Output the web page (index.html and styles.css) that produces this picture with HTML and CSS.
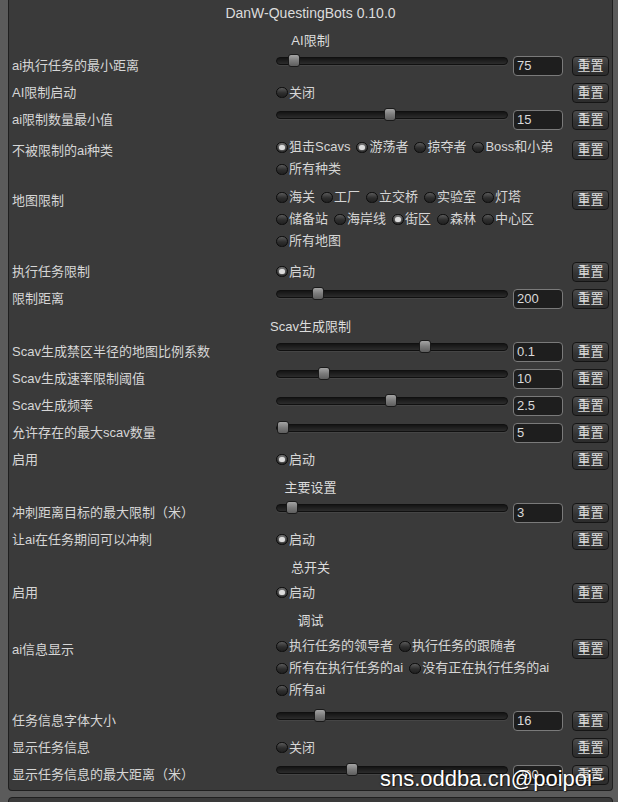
FILE: index.html
```html
<!DOCTYPE html>
<html lang="zh-CN">
<head>
    <meta charset="UTF-8">
    <title>DanW-QuestingBots</title>
    <link rel="stylesheet" href="styles.css">
</head>
<body>
<div class="window">
    <div class="title">DanW-QuestingBots 0.10.0</div>

    <div class="header">AI限制</div>
    <div class="row">
        <div class="label">ai执行任务的最小距离</div>
        <div class="ctrl">
            <div class="slider"><span class="thumb" style="left: 11px"></span></div>
            <div class="num">75</div>
        </div>
        <button class="reset">重置</button>
    </div>
    <div class="row">
        <div class="label">AI限制启动</div>
        <div class="ctrl"><span class="tog"><i class="box"></i>关闭</span></div>
        <button class="reset">重置</button>
    </div>
    <div class="row">
        <div class="label">ai限制数量最小值</div>
        <div class="ctrl">
            <div class="slider"><span class="thumb" style="left: 107px"></span></div>
            <div class="num">15</div>
        </div>
        <button class="reset">重置</button>
    </div>
    <div class="row multi short">
        <div class="label">不被限制的ai种类</div>
        <div class="ctrl">
            <div class="lines">
                <div class="line">
                    <span class="tog on"><i class="box"></i>狙击Scavs</span>
                    <span class="tog on"><i class="box"></i>游荡者</span>
                    <span class="tog"><i class="box"></i>掠夺者</span>
                    <span class="tog"><i class="box"></i>Boss和小弟</span>
                </div>
                <div class="line">
                    <span class="tog"><i class="box"></i>所有种类</span>
                </div>
            </div>
        </div>
        <button class="reset">重置</button>
    </div>
    <div class="row multi">
        <div class="label">地图限制</div>
        <div class="ctrl">
            <div class="lines">
                <div class="line">
                    <span class="tog"><i class="box"></i>海关</span>
                    <span class="tog"><i class="box"></i>工厂</span>
                    <span class="tog"><i class="box"></i>立交桥</span>
                    <span class="tog"><i class="box"></i>实验室</span>
                    <span class="tog"><i class="box"></i>灯塔</span>
                </div>
                <div class="line">
                    <span class="tog"><i class="box"></i>储备站</span>
                    <span class="tog"><i class="box"></i>海岸线</span>
                    <span class="tog on"><i class="box"></i>街区</span>
                    <span class="tog"><i class="box"></i>森林</span>
                    <span class="tog"><i class="box"></i>中心区</span>
                </div>
                <div class="line">
                    <span class="tog"><i class="box"></i>所有地图</span>
                </div>
            </div>
        </div>
        <button class="reset">重置</button>
    </div>
    <div class="row">
        <div class="label">执行任务限制</div>
        <div class="ctrl"><span class="tog on"><i class="box"></i>启动</span></div>
        <button class="reset">重置</button>
    </div>
    <div class="row">
        <div class="label">限制距离</div>
        <div class="ctrl">
            <div class="slider"><span class="thumb" style="left: 35px"></span></div>
            <div class="num">200</div>
        </div>
        <button class="reset">重置</button>
    </div>

    <div class="header">Scav生成限制</div>
    <div class="row">
        <div class="label">Scav生成禁区半径的地图比例系数</div>
        <div class="ctrl">
            <div class="slider"><span class="thumb" style="left: 142px"></span></div>
            <div class="num">0.1</div>
        </div>
        <button class="reset">重置</button>
    </div>
    <div class="row">
        <div class="label">Scav生成速率限制阈值</div>
        <div class="ctrl">
            <div class="slider"><span class="thumb" style="left: 41px"></span></div>
            <div class="num">10</div>
        </div>
        <button class="reset">重置</button>
    </div>
    <div class="row">
        <div class="label">Scav生成频率</div>
        <div class="ctrl">
            <div class="slider"><span class="thumb" style="left: 108px"></span></div>
            <div class="num">2.5</div>
        </div>
        <button class="reset">重置</button>
    </div>
    <div class="row">
        <div class="label">允许存在的最大scav数量</div>
        <div class="ctrl">
            <div class="slider"><span class="thumb" style="left: 0px"></span></div>
            <div class="num">5</div>
        </div>
        <button class="reset">重置</button>
    </div>
    <div class="row">
        <div class="label">启用</div>
        <div class="ctrl"><span class="tog on"><i class="box"></i>启动</span></div>
        <button class="reset">重置</button>
    </div>

    <div class="header">主要设置</div>
    <div class="row">
        <div class="label">冲刺距离目标的最大限制（米）</div>
        <div class="ctrl">
            <div class="slider"><span class="thumb" style="left: 9px"></span></div>
            <div class="num">3</div>
        </div>
        <button class="reset">重置</button>
    </div>
    <div class="row">
        <div class="label">让ai在任务期间可以冲刺</div>
        <div class="ctrl"><span class="tog on"><i class="box"></i>启动</span></div>
        <button class="reset">重置</button>
    </div>

    <div class="header">总开关</div>
    <div class="row">
        <div class="label">启用</div>
        <div class="ctrl"><span class="tog on"><i class="box"></i>启动</span></div>
        <button class="reset">重置</button>
    </div>

    <div class="header">调试</div>
    <div class="row multi">
        <div class="label">ai信息显示</div>
        <div class="ctrl">
            <div class="lines">
                <div class="line">
                    <span class="tog"><i class="box"></i>执行任务的领导者</span>
                    <span class="tog"><i class="box"></i>执行任务的跟随者</span>
                </div>
                <div class="line">
                    <span class="tog"><i class="box"></i>所有在执行任务的ai</span>
                    <span class="tog"><i class="box"></i>没有正在执行任务的ai</span>
                </div>
                <div class="line">
                    <span class="tog"><i class="box"></i>所有ai</span>
                </div>
            </div>
        </div>
        <button class="reset">重置</button>
    </div>
    <div class="row">
        <div class="label">任务信息字体大小</div>
        <div class="ctrl">
            <div class="slider"><span class="thumb" style="left: 37px"></span></div>
            <div class="num">16</div>
        </div>
        <button class="reset">重置</button>
    </div>
    <div class="row">
        <div class="label">显示任务信息</div>
        <div class="ctrl"><span class="tog"><i class="box"></i>关闭</span></div>
        <button class="reset">重置</button>
    </div>
    <div class="row">
        <div class="label">显示任务信息的最大距离（米）</div>
        <div class="ctrl">
            <div class="slider"><span class="thumb" style="left: 69px"></span></div>
            <div class="num">200</div>
        </div>
        <button class="reset">重置</button>
    </div>
</div>
<div class="next"></div>

<div class="mark">sns.oddba.cn@poipoi~</div>
</body>
</html>
```

FILE: styles.css
```css
* {
    margin: 0;
    padding: 0;
}

body {
    position: relative;
    background-color: #5b5b5b;
    color: #d6d6d6;
    font-family: "Liberation Sans", "Noto Sans CJK SC", sans-serif;
    font-size: 13px;
    overflow: hidden;
}

.window {
    width: 605px;
    margin-left: 8px;
    padding: 0 3px 2px;
    box-sizing: border-box;
    background-color: #3a3a3a;
    border: 1px solid #1f1f1f;
    border-top: 0;
    border-radius: 0 0 4px 4px;
}

.title {
    height: 25px;
    padding-top: 1px;
    line-height: 25px;
    text-align: center;
    font-size: 14px;
    color: #dcdcdc;
}

.header {
    height: 23px;
    padding-top: 3px;
    line-height: 23px;
    text-align: center;
    color: #dcdcdc;
}

.row {
    display: flex;
    align-items: center;
    height: 27px;
}
.row.multi {
    height: auto;
    align-items: flex-start;
    padding: 3px 0 6px;
}
.row.multi.short {
    padding-bottom: 3px;
}
.row.multi .label {
    margin-top: 4px;
    line-height: 22px;
}
.row.multi .reset {
    margin-top: 4px;
}

.label {
    width: 264px;
    flex-shrink: 0;
    white-space: nowrap;
    line-height: 27px;
}

.ctrl {
    width: 287px;
    flex-shrink: 0;
    display: flex;
    align-items: center;
}

.slider {
    position: relative;
    width: 232px;
    height: 8px;
    margin: 0 5px 9px 0;
    box-sizing: border-box;
    border: 1px solid #101010;
    border-radius: 4px;
    background: linear-gradient(#141414, #2c2c2c);
    box-shadow: 0 1px 0 rgba(255, 255, 255, 0.06);
}
.thumb {
    position: absolute;
    top: -4px;
    width: 12px;
    height: 13px;
    box-sizing: border-box;
    border: 1px solid #1a1a1a;
    border-radius: 3px;
    background: linear-gradient(#a4a4a4, #7c7c7c 50%, #5e5e5e);
}

.num {
    width: 50px;
    height: 20px;
    box-sizing: border-box;
    padding: 0 3px;
    border: 1px solid #7a7a7a;
    border-radius: 4px;
    background-color: #1e1e1e;
    line-height: 18px;
    color: #dadada;
}

.reset {
    width: 37px;
    height: 20px;
    margin-left: 9px;
    flex-shrink: 0;
    border: 1px solid #151515;
    border-radius: 4px;
    background: linear-gradient(#4c4c4c, #333333 60%, #2c2c2c);
    color: #dedede;
    font-family: inherit;
    font-size: 13px;
    line-height: 18px;
}

.lines {
    display: flex;
    flex-direction: column;
}
.line {
    display: flex;
    align-items: center;
    height: 22px;
    white-space: nowrap;
}

.tog {
    display: inline-flex;
    align-items: center;
    margin-right: 6px;
    line-height: 22px;
}
.box {
    display: block;
    flex-shrink: 0;
    width: 12px;
    height: 11px;
    margin-right: 1px;
    box-sizing: border-box;
    border: 1px solid #0c0c0c;
    border-radius: 6px;
    background: linear-gradient(#5a5a5a, #2e2e2e 55%, #202020);
}
.tog.on .box {
    background: linear-gradient(#6a6a6a, #3a3a3a 55%, #262626);
}
.tog.on .box::after {
    content: '';
    display: block;
    width: 6px;
    height: 5px;
    margin: 2px auto 0;
    border-radius: 3px;
    background-color: #dcdcdc;
    box-shadow: 0 0 2px #bbb;
}

.next {
    height: 30px;
    margin: 6px 0 0 8px;
    width: 605px;
    box-sizing: border-box;
    background-color: #3a3a3a;
    border: 1px solid #1f1f1f;
    border-radius: 4px;
}

.mark {
    position: absolute;
    top: 768px;
    left: 380px;
    font-family: "Liberation Sans", sans-serif;
    font-size: 22px;
    line-height: 22px;
    color: #fff;
    text-shadow: 0 0 2px rgba(0, 0, 0, 0.7), 1px 1px 1px rgba(0, 0, 0, 0.5);
    white-space: nowrap;
}
```
